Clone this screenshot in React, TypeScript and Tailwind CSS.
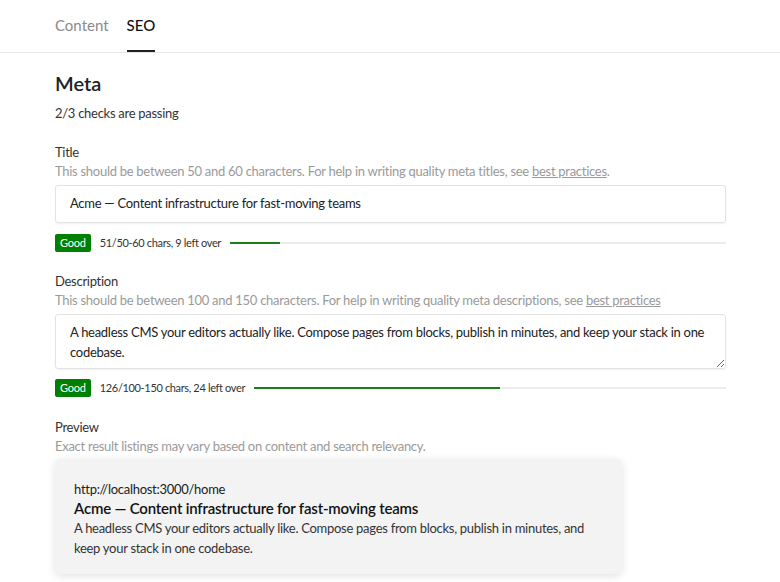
import React from "react";

const Badge = () => (
  <span className="bg-[#008000] text-white text-[11px] leading-[18px] h-[18px] px-[5px] rounded-[2px] tracking-[-0.2px]">
    Good
  </span>
);

const Meter = ({ label, pct, top }: { label: string; pct: number; top: string }) => (
  <div className={`flex items-center gap-[9px] h-[18px] ${top}`}>
    <Badge />
    <span className="text-[11px] text-[#333] whitespace-nowrap tracking-[-0.35px]">{label}</span>
    <div className="flex-1 h-[2px] bg-[#ececec]">
      <div className="h-[2px] bg-[#1a7f1a]" style={{ width: `${pct}%` }} />
    </div>
  </div>
);

export default function App() {
  return (
    <div className="min-h-[582px] bg-white text-[#222] font-['Lato',sans-serif]">
      <div className="border-b border-[#e6e6e6] px-[55px] flex gap-[18px]">
        <div className="pt-[14px] pb-[16px] text-[15px] leading-[22px] text-[#8a8a8a]">Content</div>
        <div className="pt-[14px] pb-[14px] text-[15px] leading-[22px] text-[#111] font-medium border-b-2 border-[#222]">SEO</div>
      </div>
      <div className="px-[55px] tracking-[-0.28px]">
        <div className="w-[671px]">
          <h2 className="mt-[16px] text-[20px] leading-[28px] font-semibold text-[#222] tracking-normal">Meta</h2>
          <p className="mt-[7px] text-[13px] leading-[19px] text-[#333]">2/3 checks are passing</p>

          <div className="mt-[20px] text-[13px] leading-[19px] text-[#333]">Title</div>
          <div className="text-[13px] leading-[19px] text-[#9a9a9a]">
            This should be between 50 and 60 characters. For help in writing quality meta titles, see{" "}
            <span className="underline">best practices</span>.
          </div>
          <div className="mt-[4px] h-[38px] flex items-center border border-[#e3e3e3] rounded-[3px] shadow-[0_1px_2px_rgba(0,0,0,0.06)] px-[14px] text-[13px] text-[#222]">
            Acme — Content infrastructure for fast-moving teams
          </div>
          <Meter label="51/50-60 chars, 9 left over" pct={10} top="mt-[11px]" />

          <div className="mt-[20px] text-[13px] leading-[19px] text-[#333]">Description</div>
          <div className="text-[13px] leading-[19px] text-[#9a9a9a]">
            This should be between 100 and 150 characters. For help in writing quality meta descriptions, see{" "}
            <span className="underline">best practices</span>
          </div>
          <textarea
            readOnly
            className="mt-[4px] block w-full h-[55px] border border-[#e3e3e3] rounded-[3px] shadow-[0_1px_2px_rgba(0,0,0,0.06)] px-[14px] py-[7px] text-[13px] leading-[20px] text-[#222] outline-none resize-y tracking-[-0.28px]"
            defaultValue="A headless CMS your editors actually like. Compose pages from blocks, publish in minutes, and keep your stack in one codebase."
          />
          <Meter label="126/100-150 chars, 24 left over" pct={52} top="mt-[10px]" />

          <div className="mt-[21px] text-[13px] leading-[19px] text-[#333]">Preview</div>
          <div className="text-[13px] leading-[19px] text-[#9a9a9a]">
            Exact result listings may vary based on content and search relevancy.
          </div>
          <div className="mt-[3px] w-[567px] bg-[#f3f3f3] rounded-[6px] shadow-[0_2px_8px_rgba(0,0,0,0.12)] px-[19px] pt-[20px] pb-[16px]">
            <div className="text-[13px] leading-[20px] text-[#222]">http://localhost:3000/home</div>
            <div className="text-[15px] leading-[19px] font-semibold text-[#111] tracking-[-0.2px]">Acme — Content infrastructure for fast-moving teams</div>
            <div className="text-[13px] leading-[20px] text-[#333]">
              A headless CMS your editors actually like. Compose pages from blocks, publish in minutes, and keep your stack in one codebase.
            </div>
          </div>
        </div>
      </div>
    </div>
  );
}
